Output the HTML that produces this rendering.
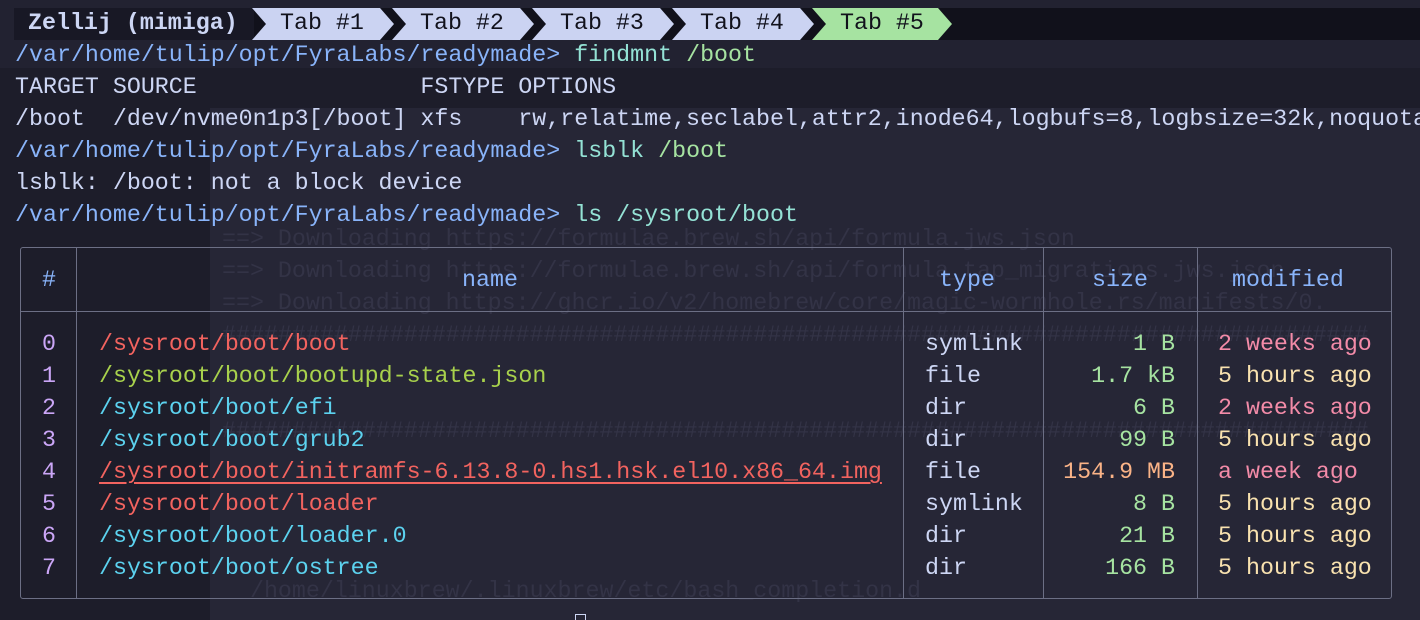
<!DOCTYPE html>
<html><head><meta charset="utf-8"><style>
body{margin:0;width:1420px;height:620px;overflow:hidden;background:#262636;position:relative;font-family:"Liberation Mono","DejaVu Sans Mono",monospace;font-size:23.3px;}
.l{position:absolute;white-space:pre;line-height:32px;height:32px;color:#cdd6f4}
.g{color:#333346}
.p{color:#89b4fa}.c{color:#94e2d5}.a{color:#a6e3a1}
.r{color:#f2635f}.y{color:#a8d14c}.cy{color:#5cd2ef}.n{color:#cba6f7}.h{color:#89b4fa}
.s{color:#a6e3a1}.o{color:#fab387}.pk{color:#f38ba8}.ye{color:#f9e2af}
.bg{position:absolute}
</style></head><body>
<div class="bg" style="left:0;top:0;width:1420px;height:68px;background:#222231"></div>
<div class="bg" style="left:0;top:68px;width:1420px;height:40px;background:#1d1d2a"></div>
<div class="bg" style="left:0;top:108px;width:210px;height:512px;background:#1d1d2a"></div>
<div class="bg" style="left:0;top:40px;width:1420px;height:28px;background:#222231"></div>

<div class="l g" style="left:222px;top:223px">==> Downloading https://formulae.brew.sh/api/formula.jws.json</div>
<div class="l g" style="left:222px;top:255px">==> Downloading https://formulae.brew.sh/api/formula_tap_migrations.jws.json</div>
<div class="l g" style="left:222px;top:287px">==> Downloading https://ghcr.io/v2/homebrew/core/magic-wormhole.rs/manifests/0.</div>
<div class="l g" style="left:222px;top:319px">##################################################################################</div>
<div class="l g" style="left:222px;top:415px">##################################################################################</div>
<div class="l g" style="left:222px;top:575px">  /home/linuxbrew/.linuxbrew/etc/bash_completion.d</div>

<svg style="position:absolute;left:0;top:0" width="1420" height="42">
<rect x="14" y="8" width="1406" height="32" fill="#11111b"/>
<rect x="14" y="8" width="240" height="32" fill="#181825"/>
<polygon points="252,8 380,8 394,24 380,40 252,40 266,24" fill="#cbd3f2"/>
<polygon points="392,8 520,8 534,24 520,40 392,40 406,24" fill="#cbd3f2"/>
<polygon points="532,8 660,8 674,24 660,40 532,40 546,24" fill="#cbd3f2"/>
<polygon points="672,8 800,8 814,24 800,40 672,40 686,24" fill="#cbd3f2"/>
<polygon points="812,8 938,8 952,24 938,40 812,40 826,24" fill="#a6e3a1"/>
</svg>
<div class="l" style="left:28px;top:7px;font-weight:bold;color:#cdd6f4">Zellij (mimiga)</div>
<div class="l" style="left:280px;top:7px;color:#11111b">Tab #1</div>
<div class="l" style="left:420px;top:7px;color:#11111b">Tab #2</div>
<div class="l" style="left:560px;top:7px;color:#11111b">Tab #3</div>
<div class="l" style="left:700px;top:7px;color:#11111b">Tab #4</div>
<div class="l" style="left:840px;top:7px;color:#11111b">Tab #5</div>

<div class="l" style="left:15px;top:39px"><span class="p">/var/home/tulip/opt/FyraLabs/readymade&gt;</span> <span class="c">findmnt</span> <span class="a">/boot</span></div>
<div class="l" style="left:15px;top:71px">TARGET SOURCE                FSTYPE OPTIONS</div>
<div class="l" style="left:15px;top:103px">/boot  /dev/nvme0n1p3[/boot] xfs    rw,relatime,seclabel,attr2,inode64,logbufs=8,logbsize=32k,noquota</div>
<div class="l" style="left:15px;top:135px"><span class="p">/var/home/tulip/opt/FyraLabs/readymade&gt;</span> <span class="c">lsblk</span> <span class="a">/boot</span></div>
<div class="l" style="left:15px;top:167px">lsblk: /boot: not a block device</div>
<div class="l" style="left:15px;top:199px"><span class="p">/var/home/tulip/opt/FyraLabs/readymade&gt;</span> <span class="c">ls /sysroot/boot</span></div>

<div class="bg" style="left:20px;top:247px;width:1372px;height:352px;border:1px solid #6c6f85;border-radius:3px;box-sizing:border-box"></div>
<div class="bg" style="left:20px;top:311px;width:1372px;height:1px;background:#6c6f85"></div>
<div class="bg" style="left:76px;top:247px;width:1px;height:352px;background:#6c6f85"></div>
<div class="bg" style="left:903px;top:247px;width:1px;height:352px;background:#6c6f85"></div>
<div class="bg" style="left:1043px;top:247px;width:1px;height:352px;background:#6c6f85"></div>
<div class="bg" style="left:1197px;top:247px;width:1px;height:352px;background:#6c6f85"></div>

<div class="l h" style="left:42px;top:264px">#</div>
<div class="l h" style="left:462px;top:264px">name</div>
<div class="l h" style="left:939px;top:264px">type</div>
<div class="l h" style="left:1092px;top:264px">size</div>
<div class="l h" style="left:1232px;top:264px">modified</div>

<div class="l n" style="left:42px;top:328px">0<br>1<br>2<br>3<br>4<br>5<br>6<br>7</div>
<div class="l r" style="left:99px;top:328px">/sysroot/boot/boot</div>
<div class="l y" style="left:99px;top:360px">/sysroot/boot/bootupd-state.json</div>
<div class="l cy" style="left:99px;top:392px">/sysroot/boot/efi</div>
<div class="l cy" style="left:99px;top:424px">/sysroot/boot/grub2</div>
<div class="l r" style="left:99px;top:456px;text-decoration:underline;text-underline-offset:4px">/sysroot/boot/initramfs-6.13.8-0.hs1.hsk.el10.x86_64.img</div>
<div class="l r" style="left:99px;top:488px">/sysroot/boot/loader</div>
<div class="l cy" style="left:99px;top:520px">/sysroot/boot/loader.0</div>
<div class="l cy" style="left:99px;top:552px">/sysroot/boot/ostree</div>
<div class="l" style="left:925px;top:328px">symlink<br>file<br>dir<br>dir<br>file<br>symlink<br>dir<br>dir</div>
<div class="l s" style="left:1021px;top:328px;width:154px;text-align:right;height:auto">1 B<br>1.7 kB<br>6 B<br>99 B<br><span class="o">154.9 MB</span><br>8 B<br>21 B<br>166 B</div>
<div class="l" style="left:1218px;top:328px;height:auto"><span class="pk">2 weeks ago</span><br><span class="ye">5 hours ago</span><br><span class="pk">2 weeks ago</span><br><span class="ye">5 hours ago</span><br><span class="pk">a week ago</span><br><span class="ye">5 hours ago</span><br><span class="ye">5 hours ago</span><br><span class="ye">5 hours ago</span></div>
<div class="bg" style="left:575px;top:614px;width:11px;height:6px;border:1px solid #cdd6f4;border-bottom:none;box-sizing:border-box"></div>
</body></html>
